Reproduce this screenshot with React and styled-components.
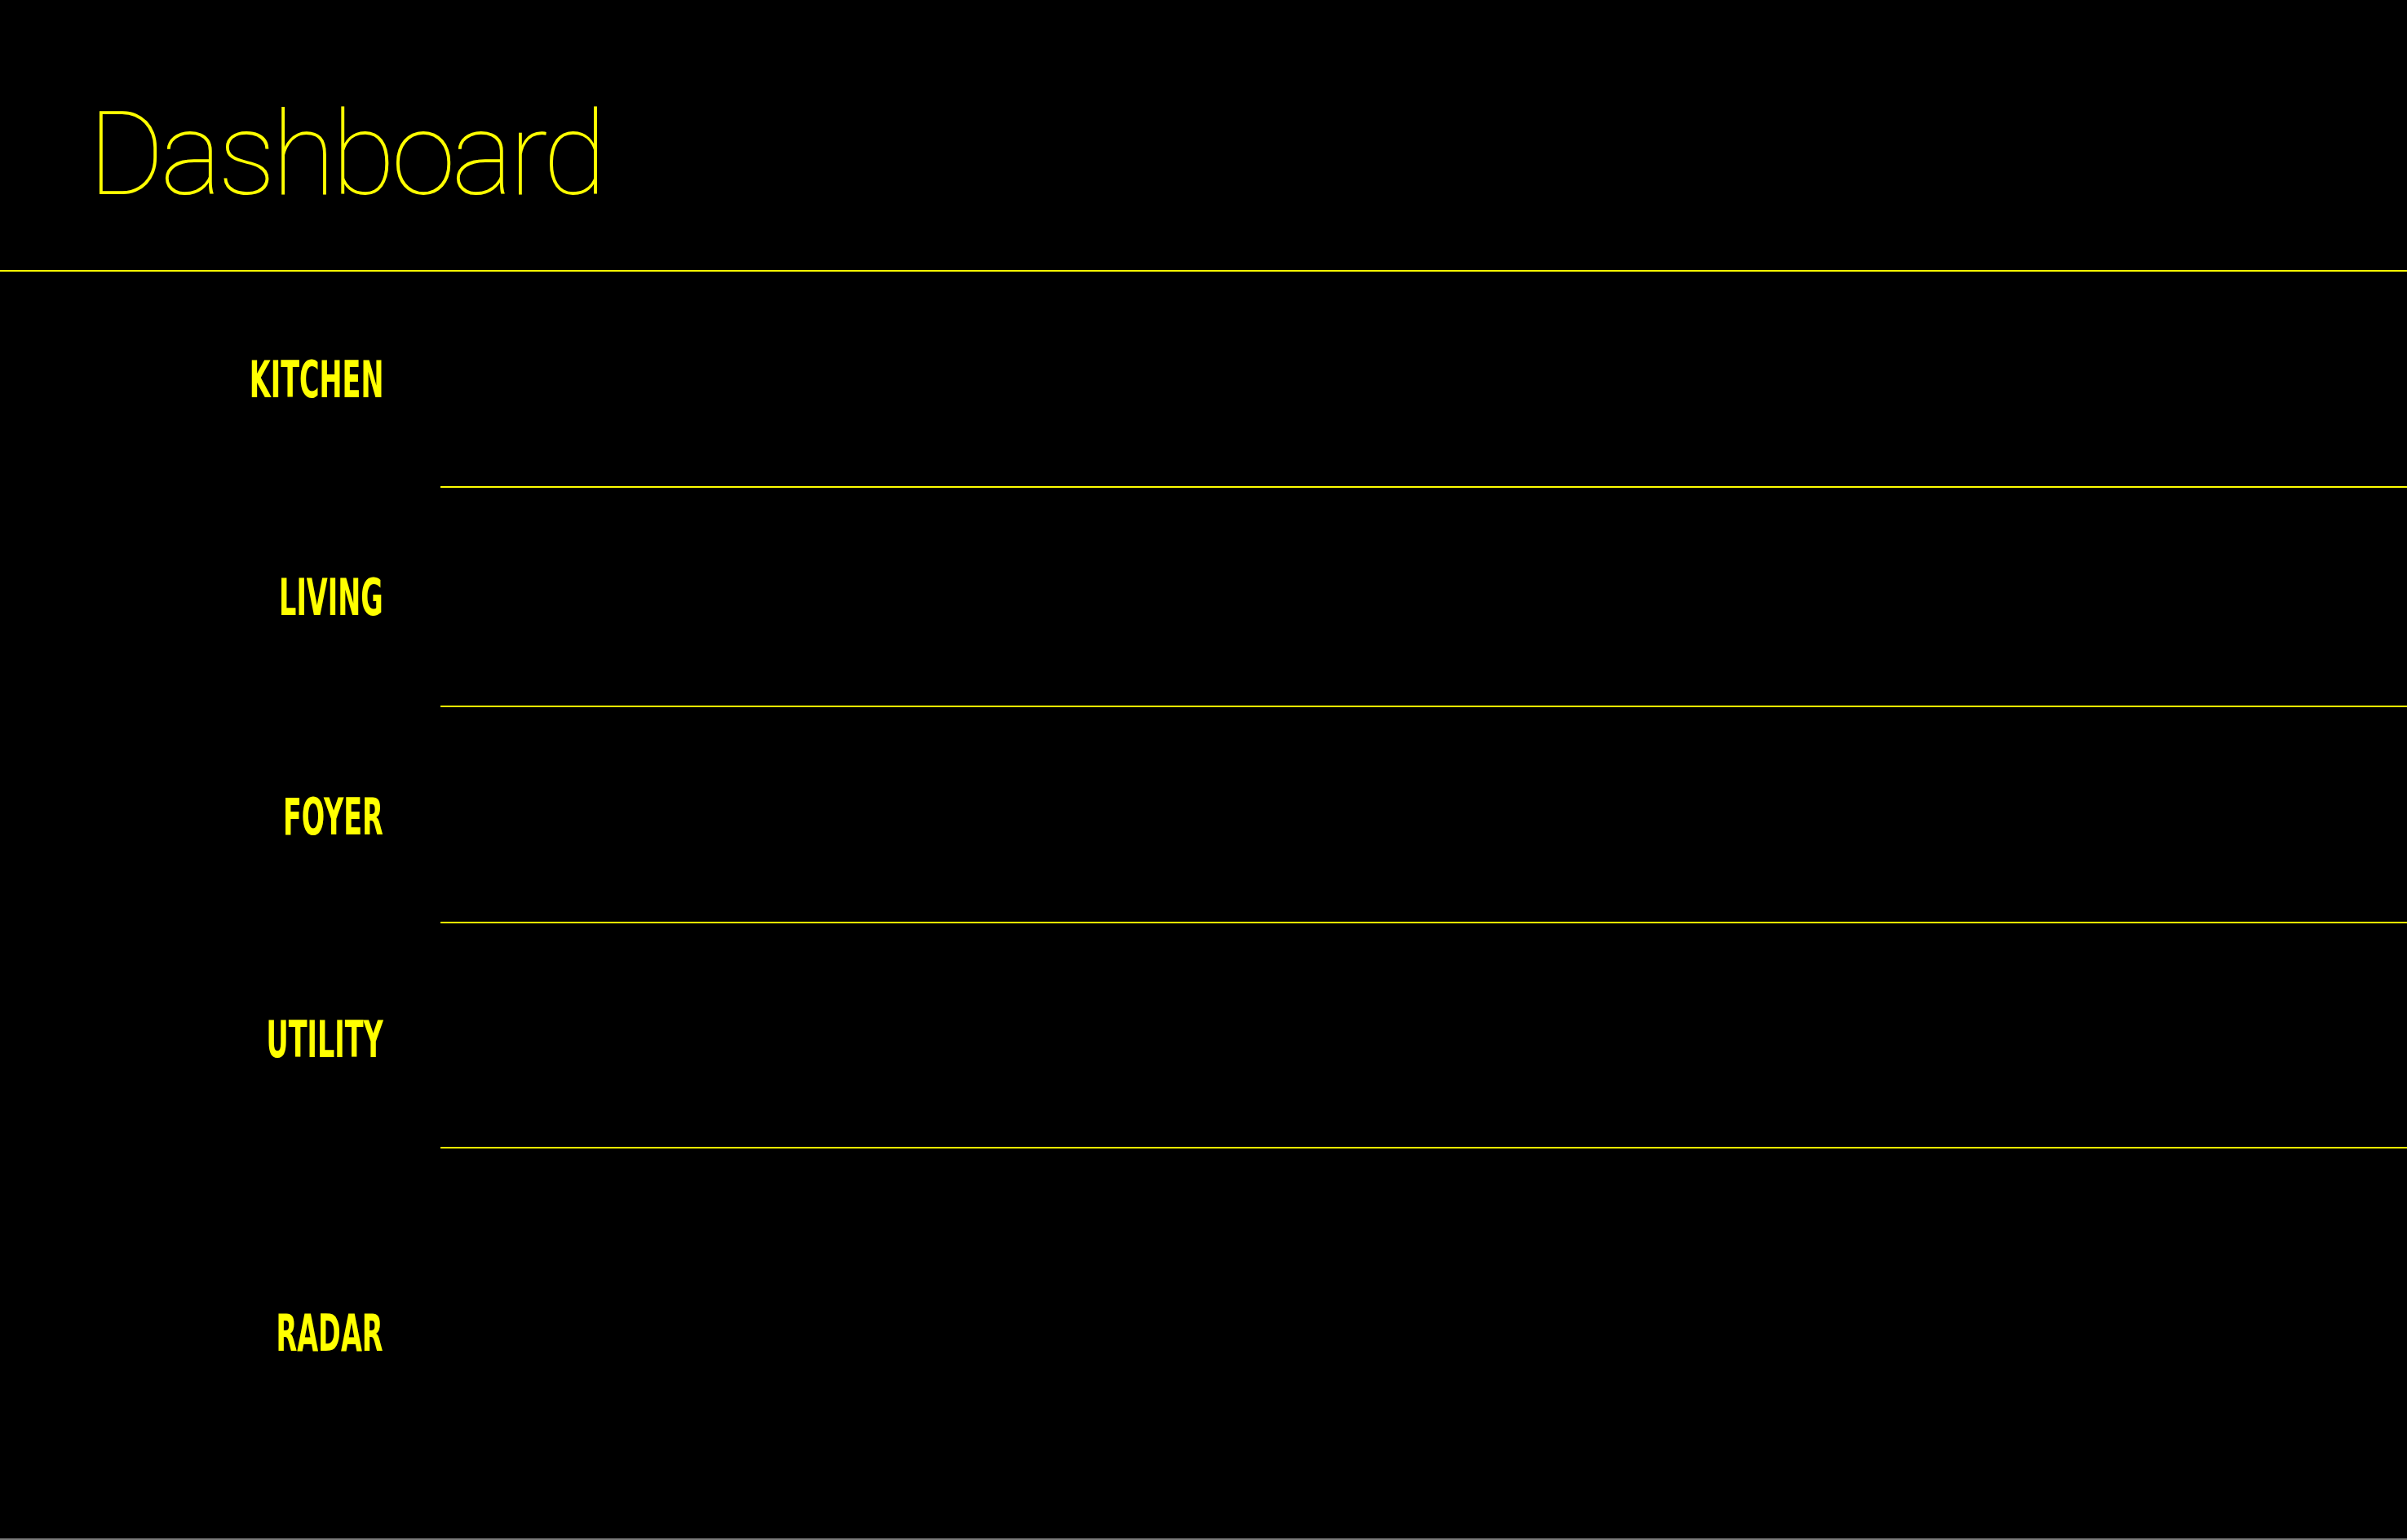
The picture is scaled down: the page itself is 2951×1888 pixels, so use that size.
import React from "react";
import styled, { createGlobalStyle } from "styled-components";

const rooms = [
  { name: "KITCHEN", h: 265, shift: 0 },
  { name: "LIVING", h: 269, shift: 0 },
  { name: "FOYER", h: 265, shift: 2 },
  { name: "UTILITY", h: 276, shift: 5 },
  { name: "RADAR", h: 478, shift: -12, last: true },
];

const App = () => {
  return (
    <>
      <Global />
      <Page>
        <Header>
          <Title>Dashboard</Title>
        </Header>
        <Rooms>
          {rooms.map((r) => (
            <Row key={r.name} h={r.h}>
              <Label shift={r.shift}>
                <LabelText>{r.name}</LabelText>
              </Label>
              <Panel last={r.last} />
            </Row>
          ))}
        </Rooms>
      </Page>
    </>
  );
};

const Global = createGlobalStyle`
  html {
    background: #7a7a7a;
  }
  body {
    margin: 0;
    background: #7a7a7a;
  }
`;

const Page = styled.div`
  background-color: #000;
  height: 1886px;
  display: flex;
  flex-direction: column;
  overflow: hidden;
`;

const Header = styled.header`
  height: 331px;
  border-bottom: 2px solid #ffff00;
  padding-left: 108px;
  box-sizing: content-box;
`;

const Title = styled.h1`
  margin: 0;
  padding-top: 118px;
  font-family: Roboto, "Liberation Sans", sans-serif;
  font-weight: 100;
  font-size: 143px;
  line-height: 1;
  color: #ffff00;
  letter-spacing: -5px;
`;

const Rooms = styled.div`
  display: flex;
  flex-direction: column;
  flex: 1;
`;

const Row = styled.section`
  display: grid;
  grid-template-columns: 540px 1fr;
  height: ${(p) => p.h}px;
`;

const Label = styled.div`
  display: flex;
  align-items: center;
  justify-content: flex-end;
  padding-right: 70px;
  padding-top: ${(p) => (p.shift > 0 ? p.shift * 2 : 0)}px;
  padding-bottom: ${(p) => (p.shift < 0 ? -p.shift * 2 : 0)}px;
`;

const LabelText = styled.span`
  font-family: "DejaVu Sans Condensed", "DejaVu Sans", sans-serif;
  font-weight: 700;
  font-size: 62px;
  line-height: 1;
  color: #ffff00;
  display: inline-block;
  transform: scaleX(0.6);
  transform-origin: right center;
`;

const Panel = styled.div`
  border-bottom: ${(p) => (p.last ? "none" : "2px solid #ffff00")};
`;

export default App;
